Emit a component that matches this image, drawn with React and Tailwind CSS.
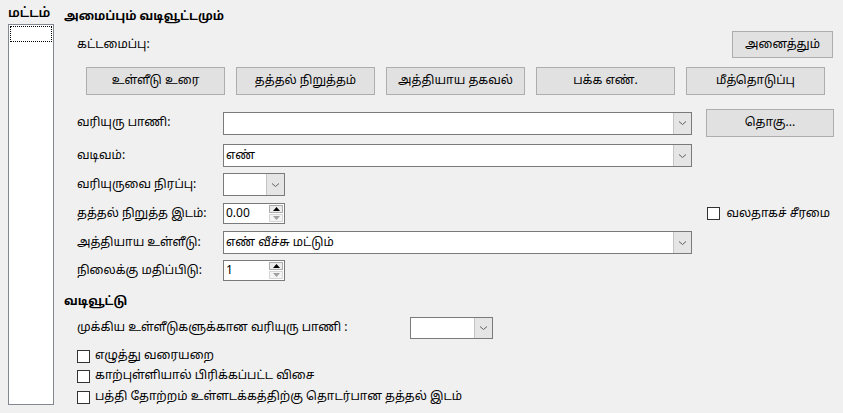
import React from "react";

const font = { fontFamily: '"Nirmala UI", "Noto Sans Tamil", "Noto Sans", "Liberation Sans", sans-serif' };

function Chevron() {
  return (
    <svg width="9" height="6" viewBox="0 0 9 6" className="text-[#606060]">
      <path d="M1 1.5 L4.5 4.5 L8 1.5" fill="none" stroke="currentColor" strokeWidth="1" />
    </svg>
  );
}

function Combo({ value = "", className = "" }) {
  return (
    <div className={`flex border border-[#7a7a7a] bg-white ${className}`}>
      <div className="flex-1 pl-[2px] flex items-center text-black overflow-hidden whitespace-nowrap">{value}</div>
      <div className="w-[18px] bg-[#e5e5e5] border-l border-[#c5c5c5] flex items-center justify-center">
        <Chevron />
      </div>
    </div>
  );
}

function Spin({ value }) {
  return (
    <div className="flex w-[62px] h-[21px] border border-[#7a7a7a] bg-white">
      <div className="flex-1 pl-[2px] flex items-center">{value}</div>
      <div className="w-[15px] flex flex-col py-[1px] pr-[1px] gap-[1px]">
        <div className="flex-1 bg-[#ececec] border border-[#adadad] flex items-center justify-center">
          <svg width="7" height="4" viewBox="0 0 7 4"><path d="M0 4 L3.5 0 L7 4Z" fill="#000" /></svg>
        </div>
        <div className="flex-1 bg-[#f4f4f4] border border-[#d6d6d6] flex items-center justify-center">
          <svg width="7" height="4" viewBox="0 0 7 4"><path d="M0 0 L3.5 4 L7 0Z" fill="#a0a0a0" /></svg>
        </div>
      </div>
    </div>
  );
}

function Btn({ children, className = "" }) {
  return (
    <div className={`flex items-center justify-center bg-[#e1e1e1] border border-[#adadad] ${className}`}>
      {children}
    </div>
  );
}

function Check({ label, className = "" }) {
  return (
    <div className={`flex items-center gap-[5px] ${className}`}>
      <div className="w-[13px] h-[13px] border border-[#333] bg-white" />
      <span>{label}</span>
    </div>
  );
}

function Row({ label, children, className = "" }) {
  return (
    <div className={`flex items-center ${className}`}>
      <div className="w-[146px]">{label}</div>
      {children}
    </div>
  );
}

export default function App() {
  return (
    <div className="w-[843px] h-[413px] bg-[#f0f0f0] flex text-[12px] text-black leading-none" style={font}>
      <div className="ml-[8px] flex flex-col">
        <div className="h-[24px] pt-[8px] text-[13px] font-semibold">மட்டம்</div>
        <div className="w-[46px] h-[381px] bg-white border border-[#828790] p-[1px]">
          <div className="h-[16px] border border-dotted border-black" />
        </div>
      </div>

      <div className="ml-[10px] flex-1 flex flex-col">
        <div className="h-[18px] mt-[8px] flex items-center font-bold">அமைப்பும் வடிவூட்டமும்</div>

        <div className="pl-[13px] flex flex-col">
          <div className="mt-[5px] h-[27px] flex items-center justify-between pr-[10px]">
            <span>கட்டமைப்பு:</span>
            <Btn className="w-[101px] h-[27px]">அனைத்தும்</Btn>
          </div>

          <div className="mt-[9px] flex gap-[11px] pl-[9px]">
            <Btn className="w-[139px] h-[28px]">உள்ளீடு உரை</Btn>
            <Btn className="w-[139px] h-[28px]">தத்தல் நிறுத்தம்</Btn>
            <Btn className="w-[139px] h-[28px]">அத்தியாய தகவல்</Btn>
            <Btn className="w-[139px] h-[28px]">பக்க எண்.</Btn>
            <Btn className="w-[139px] h-[28px]">மீத்தொடுப்பு</Btn>
          </div>

          <Row label="வரியுரு பாணி:" className="mt-[14px] h-[28px]">
            <Combo className="w-[469px] h-[23px]" />
            <Btn className="ml-[14px] w-[128px] h-[28px]">தொகு...</Btn>
          </Row>

          <Row label="வடிவம்:" className="mt-[7px] h-[23px]">
            <Combo value="எண்" className="w-[469px] h-[23px]" />
          </Row>

          <Row label="வரியுருவை நிரப்பு:" className="mt-[6px] h-[23px]">
            <Combo className="w-[62px] h-[23px]" />
          </Row>

          <Row label="தத்தல் நிறுத்த இடம்:" className="mt-[7px] h-[21px]">
            <Spin value="0.00" />
            <div className="flex-1" />
            <Check label="வலதாகச் சீரமை" className="mr-[13px] gap-[6px]" />
          </Row>

          <Row label="அத்தியாய உள்ளீடு:" className="mt-[7px] h-[23px]">
            <Combo value="எண் வீச்சு மட்டும்" className="w-[469px] h-[23px]" />
          </Row>

          <Row label="நிலைக்கு மதிப்பிடு:" className="mt-[6px] h-[21px]">
            <Spin value="1" />
          </Row>
        </div>

        <div className="mt-[12px] h-[18px] flex items-center font-bold">வடிவூட்டு</div>

        <div className="pl-[13px] flex flex-col">
          <div className="mt-[6px] h-[22px] flex items-center">
            <div className="w-[333px]">முக்கிய உள்ளீடுகளுக்கான வரியுரு பாணி :</div>
            <Combo className="w-[83px] h-[22px]" />
          </div>
          <Check label="எழுத்து வரையறை" className="mt-[10px] h-[14px]" />
          <Check label="காற்புள்ளியால் பிரிக்கப்பட்ட விசை" className="mt-[6px] h-[14px]" />
          <Check label="பத்தி தோற்றம் உள்ளடக்கத்திற்கு தொடர்பான தத்தல் இடம்" className="mt-[7px] h-[14px]" />
        </div>
      </div>
    </div>
  );
}
